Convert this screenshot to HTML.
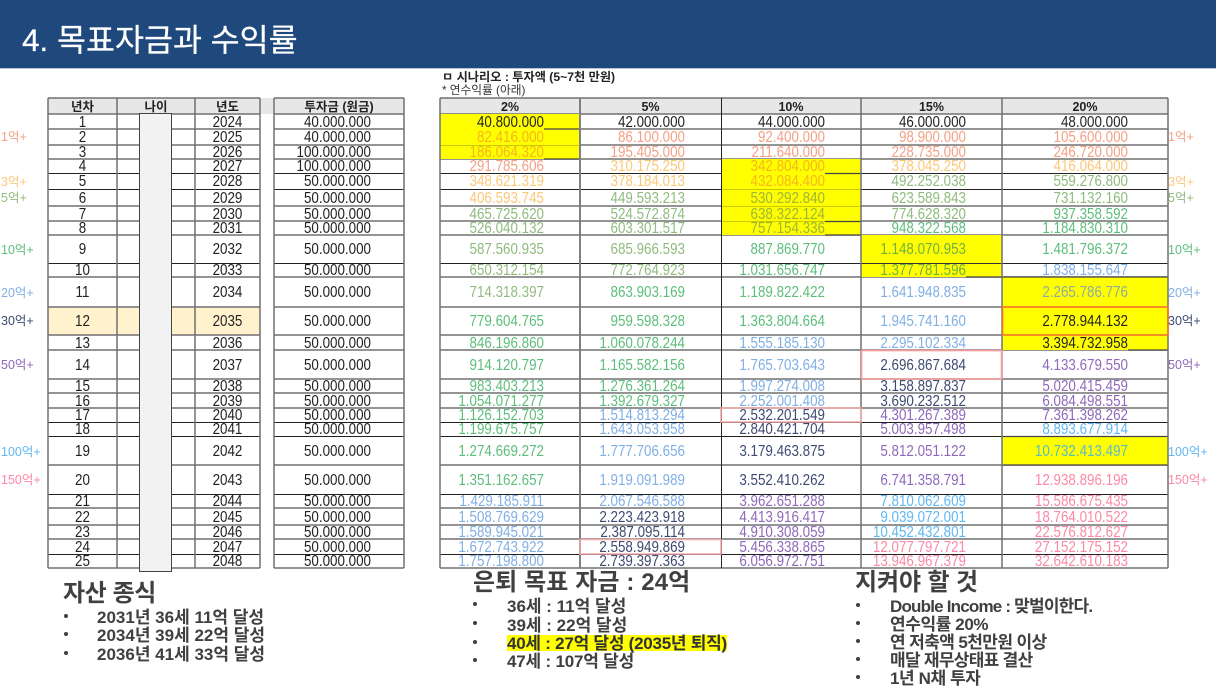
<!DOCTYPE html>
<html lang="ko"><head><meta charset="utf-8"><title>4. 목표자금과 수익률</title>
<style>
html,body{margin:0;padding:0;background:#fff}
body{width:1216px;height:684px;position:relative;overflow:hidden;font-family:"Liberation Sans","Noto Sans CJK KR",sans-serif;color:#222;filter:blur(.3px)}
#hd{position:absolute;left:0;top:0;width:1216px;height:68px;background:#1f497d;border-bottom:1px solid #b8c4d4}
#hd div{position:absolute;left:22px;top:18px;font-size:31.5px;line-height:44px;color:#fff;white-space:nowrap;-webkit-text-stroke:.25px #fff}
svg{position:absolute;left:0;top:0}
.g{position:absolute;top:98px;display:grid;grid-template-rows:16px 15px 16px 14px 14px 16px 17px 15px 14px 28px 14px 30px 28px 15px 29px 14px 15px 14px 14px 29px 29px 14px 17px 14px 15px 14px;font-size:13.4px;letter-spacing:0}
.g span{display:flex;align-items:center;justify-content:flex-end;line-height:12px;white-space:nowrap;transform:translateY(.5px) scaleY(1.15)}
.g .t{justify-content:center!important;padding:0!important;font-weight:bold;font-size:12.5px;color:#222;transform:translateY(1px)}
#a{left:48px;width:212px;grid-template-columns:69px 78px 65px}
#a span{justify-content:center}
#b{left:274px;width:130px;grid-template-columns:130px}
#b span{padding-right:33px}
#c{left:440px;width:728px;grid-template-columns:140px 141px 140px 141px 166px}
#c span{padding-right:36px}
#c span:nth-child(5n){padding-right:40px}
.k{color:#222}.s{color:#f5a084}.o{color:#fcc777}.v{color:#8fbb7e}.h{color:#5cbe7a}.u{color:#80afe6}.n{color:#3d4a72}.p{color:#8f68bb}.l{color:#5fb8f4}.r{color:#fb88a6}.y{color:#f5b51e}.q{color:#9cb53a}.w{color:#6fb043}
#age{position:absolute;left:138.5px;top:113px;width:31px;height:457px;background:#f2f2f2;border:1px solid #444}
.lb{position:absolute;font-size:12.5px;line-height:14px;white-space:nowrap}
.x{position:absolute;white-space:nowrap;color:#404040}
.ti{font-size:24px;line-height:30px;font-weight:bold;letter-spacing:-.4px}
.li{font-size:17px;line-height:20px;font-weight:bold;letter-spacing:0}
.dot{position:absolute;width:4px;height:4px;border-radius:50%;background:#404040}
</style></head><body>
<div id="hd"><div>4. 목표자금과 수익률</div></div>
<div class="x" style="left:442px;top:69.5px;font-size:12.2px;line-height:15px;font-weight:bold;color:#222">ㅁ 시나리오 : 투자액 (5~7천 만원)</div>
<div class="x" style="left:442px;top:84px;font-size:11.7px;line-height:14px;color:#333">* 연수익률 (아래)</div>

<svg width="1216" height="684" viewBox="0 0 1216 684" fill="none">
<rect x="48" y="98" width="356" height="16" fill="#e7e7e7"/>
<rect x="440" y="98" width="728" height="16" fill="#e7e7e7"/>
<rect x="48" y="307" width="212" height="28" fill="#fff2cc"/>
<path stroke="#707070" stroke-width="1.5" stroke-dasharray="212 14 130 36 728 0" d="M48 98H1168M48 114H1168M48 129H1168M48 145H1168M48 159H1168M48 206H1168M48 221H1168M48 235H1168M48 277H1168M48 307H1168M48 335H1168M48 350H1168M48 379H1168M48 393H1168M48 408H1168M48 465H1168M48 508H1168M48 525H1168M48 539H1168M48 568H1168"/>
<path stroke="#222" stroke-width="1" stroke-dasharray="212 14 130 36 728 0" d="M48 173.5H1168M48 189.5H1168M48 263.5H1168M48 422.5H1168M48 436.5H1168M48 494.5H1168M48 554.5H1168"/>
<path fill="#ffff00" d="M440 114H580V159H440ZM721 159H861V235H721ZM861 235H1002V277H861ZM1002 277H1168V350H1002ZM1002 436H1168V465H1002Z"/>
<path stroke="#c9c900" stroke-width="1" d="M721 189.5H861M721 206.5H861M721 221.5H861M440 145.5H580"/>
<path stroke="#333" stroke-width="1" d="M861 263.5H1002"/>
<path stroke="#444" stroke-width="1.2" d="M544 129H580M544 159H580M825 173.5H861M825 221.5H861M825 235H861M966 277H1002M1128 350H1168M1002 277H1168M1002 436.5H1168M1002 465H1168"/>
<path stroke="#707070" stroke-width="1.5" d="M48 98V568M117 98V568M195 98V568M260 98V568M274 98V568M404 98V568M440 98V568M861 98V568M1002 98V568M1168 98V568"/>
<path stroke="#808080" stroke-width="2" d="M580 98V568"/>
<path stroke="#222" stroke-width="1" d="M721.5 98V568"/>
<path stroke="#f2aaaa" stroke-width="1.5" d="M580 539.5H721V554H580ZM721 408H861V422H721Z"/>
<rect x="861.5" y="350.5" width="140" height="28.5" stroke="#f59a9a" stroke-width="1.6"/>
<path stroke="#f9a0a0" stroke-width="1.5" d="M1002 350V379"/>
<rect x="1002.5" y="307" width="165.5" height="28" stroke="#f4742e" stroke-width="1.6"/>
</svg>

<div class="g" id="a">
<span class="t">년차</span><span class="t">나이</span><span class="t">년도</span>
<span>1</span><span></span><span>2024</span>
<span>2</span><span></span><span>2025</span>
<span>3</span><span></span><span>2026</span>
<span>4</span><span></span><span>2027</span>
<span>5</span><span></span><span>2028</span>
<span>6</span><span></span><span>2029</span>
<span>7</span><span></span><span>2030</span>
<span>8</span><span></span><span>2031</span>
<span>9</span><span></span><span>2032</span>
<span>10</span><span></span><span>2033</span>
<span>11</span><span></span><span>2034</span>
<span>12</span><span></span><span>2035</span>
<span>13</span><span></span><span>2036</span>
<span>14</span><span></span><span>2037</span>
<span>15</span><span></span><span>2038</span>
<span>16</span><span></span><span>2039</span>
<span>17</span><span></span><span>2040</span>
<span>18</span><span></span><span>2041</span>
<span>19</span><span></span><span>2042</span>
<span>20</span><span></span><span>2043</span>
<span>21</span><span></span><span>2044</span>
<span>22</span><span></span><span>2045</span>
<span>23</span><span></span><span>2046</span>
<span>24</span><span></span><span>2047</span>
<span>25</span><span></span><span>2048</span>
</div>
<div id="age"></div>
<div class="g" id="b">
<span class="t">투자금 (원금)</span>
<span>40.000.000</span><span>40.000.000</span><span>100.000.000</span><span>100.000.000</span><span>50.000.000</span>
<span>50.000.000</span><span>50.000.000</span><span>50.000.000</span><span>50.000.000</span><span>50.000.000</span>
<span>50.000.000</span><span>50.000.000</span><span>50.000.000</span><span>50.000.000</span><span>50.000.000</span>
<span>50.000.000</span><span>50.000.000</span><span>50.000.000</span><span>50.000.000</span><span>50.000.000</span>
<span>50.000.000</span><span>50.000.000</span><span>50.000.000</span><span>50.000.000</span><span>50.000.000</span>
</div>
<div class="g" id="c">
<span class="t">2%</span><span class="t">5%</span><span class="t">10%</span><span class="t">15%</span><span class="t">20%</span>
<span class="k">40.800.000</span><span class="k">42.000.000</span><span class="k">44.000.000</span><span class="k">46.000.000</span><span class="k">48.000.000</span>
<span class="y">82.416.000</span><span class="s">86.100.000</span><span class="s">92.400.000</span><span class="s">98.900.000</span><span class="s">105.600.000</span>
<span class="y">186.064.320</span><span class="s">195.405.000</span><span class="s">211.640.000</span><span class="s">228.735.000</span><span class="s">246.720.000</span>
<span class="s">291.785.606</span><span class="o">310.175.250</span><span class="y">342.804.000</span><span class="o">378.045.250</span><span class="o">416.064.000</span>
<span class="o">348.621.319</span><span class="o">378.184.013</span><span class="y">432.084.400</span><span class="v">492.252.038</span><span class="v">559.276.800</span>
<span class="o">406.593.745</span><span class="v">449.593.213</span><span class="q">530.292.840</span><span class="v">623.589.843</span><span class="v">731.132.160</span>
<span class="v">465.725.620</span><span class="v">524.572.874</span><span class="q">638.322.124</span><span class="v">774.628.320</span><span class="h">937.358.592</span>
<span class="v">526.040.132</span><span class="v">603.301.517</span><span class="q">757.154.336</span><span class="h">948.322.568</span><span class="h">1.184.830.310</span>
<span class="v">587.560.935</span><span class="v">685.966.593</span><span class="h">887.869.770</span><span class="w">1.148.070.953</span><span class="h">1.481.796.372</span>
<span class="v">650.312.154</span><span class="v">772.764.923</span><span class="h">1.031.656.747</span><span class="w">1.377.781.596</span><span class="u">1.838.155.647</span>
<span class="v">714.318.397</span><span class="h">863.903.169</span><span class="h">1.189.822.422</span><span class="u">1.641.948.835</span><span class="u" style="color:#8fa9a8">2.265.786.776</span>
<span class="h">779.604.765</span><span class="h">959.598.328</span><span class="h">1.363.804.664</span><span class="u">1.945.741.160</span><span class="k">2.778.944.132</span>
<span class="h">846.196.860</span><span class="h">1.060.078.244</span><span class="u">1.555.185.130</span><span class="u">2.295.102.334</span><span class="k">3.394.732.958</span>
<span class="h">914.120.797</span><span class="h">1.165.582.156</span><span class="u">1.765.703.643</span><span class="n">2.696.867.684</span><span class="p">4.133.679.550</span>
<span class="h">983.403.213</span><span class="h">1.276.361.264</span><span class="u">1.997.274.008</span><span class="n">3.158.897.837</span><span class="p">5.020.415.459</span>
<span class="h">1.054.071.277</span><span class="h">1.392.679.327</span><span class="u">2.252.001.408</span><span class="n">3.690.232.512</span><span class="p">6.084.498.551</span>
<span class="h">1.126.152.703</span><span class="u">1.514.813.294</span><span class="n">2.532.201.549</span><span class="p">4.301.267.389</span><span class="p">7.361.398.262</span>
<span class="h">1.199.675.757</span><span class="u">1.643.053.958</span><span class="n">2.840.421.704</span><span class="p">5.003.957.498</span><span class="l">8.893.677.914</span>
<span class="h">1.274.669.272</span><span class="u">1.777.706.656</span><span class="n">3.179.463.875</span><span class="p">5.812.051.122</span><span class="l" style="color:#58bcc8">10.732.413.497</span>
<span class="h">1.351.162.657</span><span class="u">1.919.091.989</span><span class="n">3.552.410.262</span><span class="p">6.741.358.791</span><span class="r">12.938.896.196</span>
<span class="u">1.429.185.911</span><span class="u">2.067.546.588</span><span class="p">3.962.651.288</span><span class="l">7.810.062.609</span><span class="r">15.586.675.435</span>
<span class="u">1.508.769.629</span><span class="n">2.223.423.918</span><span class="p">4.413.916.417</span><span class="l">9.039.072.001</span><span class="r">18.764.010.522</span>
<span class="u">1.589.945.021</span><span class="n">2.387.095.114</span><span class="p">4.910.308.059</span><span class="l">10.452.432.801</span><span class="r">22.576.812.627</span>
<span class="u">1.672.743.922</span><span class="n">2.558.949.869</span><span class="p">5.456.338.865</span><span class="r">12.077.797.721</span><span class="r">27.152.175.152</span>
<span class="u">1.757.198.800</span><span class="n">2.739.397.363</span><span class="p">6.056.972.751</span><span class="r">13.946.967.379</span><span class="r">32.642.610.183</span>
</div>

<div class="lb s" style="left:1px;top:130px">1억+</div><div class="lb s" style="left:1168px;top:130px">1억+</div>
<div class="lb o" style="left:1px;top:175px">3억+</div><div class="lb o" style="left:1168px;top:175px">3억+</div>
<div class="lb v" style="left:1px;top:191px">5억+</div><div class="lb v" style="left:1168px;top:191px">5억+</div>
<div class="lb h" style="left:1px;top:243px">10억+</div><div class="lb h" style="left:1168px;top:243px">10억+</div>
<div class="lb u" style="left:1px;top:286px">20억+</div><div class="lb u" style="left:1168px;top:286px">20억+</div>
<div class="lb n" style="left:1px;top:314px">30억+</div><div class="lb n" style="left:1168px;top:314px">30억+</div>
<div class="lb p" style="left:1px;top:358px">50억+</div><div class="lb p" style="left:1168px;top:358px">50억+</div>
<div class="lb l" style="left:1px;top:445px">100억+</div><div class="lb l" style="left:1168px;top:445px">100억+</div>
<div class="lb r" style="left:1px;top:473px">150억+</div><div class="lb r" style="left:1168px;top:473px">150억+</div>

<div class="x ti" style="left:63px;top:579px">자산 종식</div>
<div class="dot" style="left:64px;top:614px"></div><div class="x li" style="left:97px;top:608px">2031년 36세 11억 달성</div>
<div class="dot" style="left:64px;top:632px"></div><div class="x li" style="left:97px;top:626px">2034년 39세 22억 달성</div>
<div class="dot" style="left:64px;top:651px"></div><div class="x li" style="left:97px;top:645px">2036년 41세 33억 달성</div>

<div class="x ti" style="left:473px;top:568px;letter-spacing:.1px">은퇴 목표 자금 : 24억</div>
<div class="dot" style="left:473px;top:602px"></div><div class="x li" style="left:507px;top:597px">36세 : 11억 달성</div>
<div class="dot" style="left:473px;top:621px"></div><div class="x li" style="left:507px;top:616px">39세 : 22억 달성</div>
<div class="dot" style="left:473px;top:640px"></div><div style="position:absolute;left:507px;top:635px;width:220px;height:16px;background:#ffff00"></div><div class="x li" style="left:507px;top:634px;color:#333;letter-spacing:-.25px">40세 : 27억 달성 (2035년 퇴직)</div>
<div class="dot" style="left:473px;top:658px"></div><div class="x li" style="left:507px;top:652px;letter-spacing:-.2px">47세 : 107억 달성</div>

<div class="x ti" style="left:855px;top:568px;letter-spacing:-.1px">지켜야 할 것</div>
<div class="dot" style="left:856px;top:603px"></div><div class="x li" style="left:890px;top:597px;letter-spacing:-.8px">Double Income : 맞벌이한다.</div>
<div class="dot" style="left:856px;top:621px"></div><div class="x li" style="left:890px;top:615px;letter-spacing:-.4px">연수익률 20%</div>
<div class="dot" style="left:856px;top:639px"></div><div class="x li" style="left:890px;top:633px;letter-spacing:-.6px">연 저축액 5천만원 이상</div>
<div class="dot" style="left:856px;top:657px"></div><div class="x li" style="left:890px;top:651px;letter-spacing:-.7px">매달 재무상태표 결산</div>
<div class="dot" style="left:856px;top:675px"></div><div class="x li" style="left:890px;top:669px;letter-spacing:-.4px">1년 N채 투자</div>
</body></html>
